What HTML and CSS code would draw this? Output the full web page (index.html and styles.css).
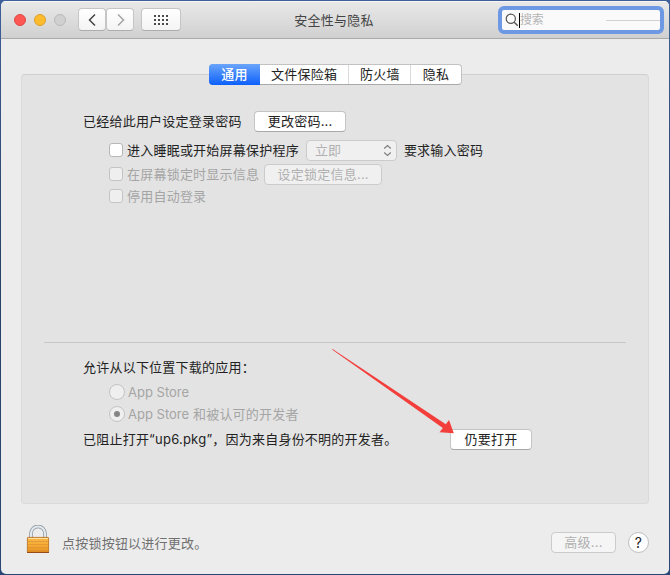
FILE: index.html
```html
<!DOCTYPE html>
<html lang="zh-CN">
<head>
<meta charset="utf-8">
<title>安全性与隐私</title>
<link rel="stylesheet" href="styles.css">
</head>
<body>
<div class="window">
  <header class="titlebar">
    <div class="lights"><i class="light red"></i><i class="light yellow"></i><i class="light off"></i></div>
    <div class="nav">
      <button class="tool"><svg width="28" height="22" viewBox="0 0 28 22"><path d="M17 5.500 11.500 11l5.500 5.500" fill="none" stroke="#444" stroke-width="1.500"/></svg></button>
      <button class="tool"><svg width="27" height="22" viewBox="0 0 27 22"><path d="M11 5.500 16.500 11 11 16.500" fill="none" stroke="#a4a4a4" stroke-width="1.500"/></svg></button>
    </div>
    <button class="tool grid"><svg width="38" height="22" viewBox="0 0 38 22"><path d="M12 7h15M12 11h15M12 15h15" stroke="#4a4a4a" stroke-width="2" stroke-dasharray="2 2"/></svg></button>
    <h1 class="title">安全性与隐私</h1>
    <div class="search">
      <svg class="lens" width="14" height="14" viewBox="0 0 14 14"><circle cx="5.800" cy="5.800" r="4.600" fill="none" stroke="#555" stroke-width="1.200"/><path d="M9.200 9.200 12.800 12.800" stroke="#555" stroke-width="1.400"/></svg>
      <i class="caret"></i><span>搜索</span><i class="line"></i>
    </div>
  </header>
  <main>
    <nav class="tabs"><span class="tab active">通用</span><span class="tab wide">文件保险箱</span><span class="tab mid">防火墙</span><span class="tab">隐私</span></nav>
    <section class="panel">
      <div class="row password"><span>已经给此用户设定登录密码</span><button class="button change">更改密码...</button></div>
      <div class="row indent wake"><i class="check"></i><span>进入睡眠或开始屏幕保护程序</span>
        <div class="button select disabled"><span>立即</span><svg width="9" height="13" viewBox="0 0 9 13"><path d="M1.200 4.500 4.500 1.500 7.800 4.500M1.200 8.500 4.500 11.500 7.800 8.500" fill="none" stroke="#808080" stroke-width="1.200"/></svg></div>
        <span>要求输入密码</span></div>
      <div class="row indent message disabled"><i class="check"></i><span>在屏幕锁定时显示信息</span><button class="button lockmsg disabled">设定锁定信息...</button></div>
      <div class="row indent auto disabled"><i class="check"></i><span>停用自动登录</span></div>
      <hr>
      <div class="row allow">允许从以下位置下载的应用：</div>
      <div class="row indent store disabled"><i class="radio"></i><span class="latin">App Store</span></div>
      <div class="row indent disabled"><i class="radio on"></i><span><span class="latin">App Store</span> 和被认可的开发者</span></div>
      <div class="row blocked"><span>已阻止打开“up6.pkg”，因为来自身份不明的开发者。</span><button class="button open">仍要打开</button></div>
    </section>
  </main>
  <footer>
    <svg class="lock" width="24" height="28" viewBox="0 0 24 28">
      <defs><linearGradient id="brass" x2="0" y2="1"><stop stop-color="#f5b84b"/><stop offset=".5" stop-color="#f8ad35"/><stop offset="1" stop-color="#e08c20"/></linearGradient></defs>
      <path d="M5 13V8.500a7 7 0 0 1 14 0V13" fill="none" stroke="#8c959d" stroke-width="3.600"/>
      <path d="M5 13V8.500a7 7 0 0 1 14 0V13" fill="none" stroke="#e1e8ee" stroke-width="2.200"/>
      <rect x="1.400" y="12.400" width="21.200" height="15" rx=".6" fill="url(#brass)" stroke="#b76b17" stroke-width=".8"/>
      <path d="M2 13.500h20" stroke="#ffe09a"/><path d="M2 16.500h20M2 19.500h20M2 22.500h20M2 25.500h20" stroke="#dc9030" stroke-width=".7"/>
      <path d="M1 27.500h22" stroke="#984b16"/>
    </svg>
    <span class="hint">点按锁按钮以进行更改。</span>
    <button class="button advanced disabled">高级...</button>
    <button class="help">?</button>
  </footer>
  <svg class="arrow" width="124" height="88" viewBox="0 0 124 88"><path d="M1 .500 1.500 0 114.800 75.300 118 71 122.800 84.300 108.500 83.300 111.800 79Z" fill="#f33f3b"/></svg>
</div>
</body>
</html>
```
FILE: styles.css
```css
* { box-sizing: border-box; }
body {
  margin: 0;
  width: 670px;
  height: 575px;
  padding: 1px;
  overflow: hidden;
  background: linear-gradient(#405f9a, #294267 45%, #294675);
  font: 13px/20px Inter, "Noto Sans CJK SC", sans-serif;
  letter-spacing: .22px;
  color: #222;
}
button { font: inherit; letter-spacing: inherit; color: inherit; padding: 0; }
.window {
  position: relative;
  width: 668px;
  height: 573px;
  overflow: hidden;
  border-radius: 5px;
  background: #ececec;
}
.titlebar {
  display: flex;
  align-items: center;
  height: 38px;
  padding-left: 13px;
  background: linear-gradient(#e9e9e9, #d0d0d0);
  border-bottom: 1px solid #aaa;
  box-shadow: inset 0 1px #f5f5f5;
}
.lights { display: flex; gap: 8px; width: 64px; }
.light { width: 12px; height: 12px; border-radius: 50%; border: 1px solid; }
.red { background: #fc5753; border-color: #df4744; }
.yellow { background: #fdbc30; border-color: #dfa023; }
.off { background: #d0d0d0; border-color: #b9b9b9; }
.nav { display: flex; }
.tool {
  height: 23px;
  border: 1px solid #c5c5c5;
  border-bottom-color: #adadad;
  border-radius: 4px;
  background: linear-gradient(#fff, #f4f4f4);
  display: flex;
  align-items: center;
  justify-content: center;
  width: 28px;
}
.tool svg { flex: none; }
.grid { width: 40px; margin-left: 7px; }
.title {
  width: 120px;
  margin: 0 0 0 93px;
  font-size: 13px;
  font-weight: 400;
  text-align: center;
  color: #444;
}
.search {
  display: flex;
  align-items: center;
  width: 166px;
  height: 28px;
  margin: 1px 0 0 104px;
  padding-left: 3px;
  border: 4px solid #6c98e4;
  border-radius: 6px;
  background: #fafafa;
  color: #b5b5b5;
  font-size: 12px;
  letter-spacing: -.3px;
}
.lens { flex: none; }
.caret { width: 1px; height: 15px; background: #000; }
.line { height: 1px; width: 54px; margin-left: auto; background: #d2d2d2; }
main { padding: 25px 20px 0; }
.tabs {
  position: relative;
  display: flex;
  width: 253px;
  height: 21px;
  margin: 0 auto -11px 188px;
  background: #fff;
  border: 1px solid #c2c2c2;
  border-bottom-color: #a9a9a9;
  border-radius: 4px;
}
.tab { width: 51px; line-height: 19px; text-align: center; border-left: 1px solid #dadada; }
.tab.wide { width: 89px; border-left: 0; }
.tab.mid { width: 62px; }
.tab.active {
  height: 21px;
  margin: -1px 0 0 -1px;
  line-height: 21px;
  border: 0;
  border-radius: 4px 0 0 4px;
  background: linear-gradient(#6aa5fb, #0d60fb);
  color: #fff;
  font-weight: 500;
}
.panel {
  height: 430px;
  width: 628px;
  padding: 35px 22px 0;
  background: #e3e3e3;
  border: 1px solid #dadada;
  border-top-color: #cecece;
  border-radius: 4px;
}
.row { display: flex; align-items: center; height: 22px; padding-left: 39px; white-space: nowrap; }
.row.indent { padding-left: 65px; }
.row.disabled { color: #a5a5a5; }
.latin { letter-spacing: 0; }
.button {
  height: 21px;
  border: 1px solid #c4c4c4;
  border-bottom-color: #a8a8a8;
  border-radius: 4px;
  background: #fff;
  line-height: 19px;
  text-align: center;
}
.button.disabled { background: #f0f0f0; border-color: #cbcbcb; color: #b0b0b0; }
.change { width: 92px; margin-left: 12.5px; }
.wake { margin-top: 7px; }
.select {
  display: flex;
  align-items: center;
  justify-content: space-between;
  width: 91px;
  margin: 0 7px;
  padding: 0 4px 0 8px;
}
.message { margin-top: 2px; }
.lockmsg { width: 118px; margin-left: 5px; }
.check {
  width: 14px;
  height: 14px;
  margin-right: 4px;
  border: 1px solid #b7b7b7;
  border-radius: 3px;
  background: #fff;
}
.disabled .check, .disabled .radio { background: #efefef; border-color: #c4c4c4; }
hr { height: 1px; margin: 135px 0 13px; border: 0; background: #c8c8c8; }
.store { margin-top: 3px; }
.radio {
  display: flex;
  align-items: center;
  justify-content: center;
  width: 16px;
  height: 16px;
  margin-right: 3px;
  border: 1px solid #bdbdbd;
  border-radius: 50%;
}
.radio.on::after { content: ""; width: 6px; height: 6px; border-radius: 50%; background: #858585; }
.blocked { margin-top: 3px; }
.open { width: 82px; margin-left: auto; margin-right: 94px; }
footer { display: flex; align-items: center; height: 69px; padding: 8px 20px 0 24px; }
.lock { margin: -7px 0 0 1px; }
.hint { margin-left: 12px; color: #707070; }
.advanced { width: 65px; margin-left: auto; }
.advanced.disabled { background: #f5f5f5; }
.help {
  width: 21px;
  height: 21px;
  margin: -1px 0 0 12px;
  border: 1px solid #bdbdbd;
  border-radius: 50%;
  background: #fff;
  font-size: 14px;
  line-height: 19px;
}
.arrow { position: absolute; left: 330px; top: 348px; pointer-events: none; }
```
